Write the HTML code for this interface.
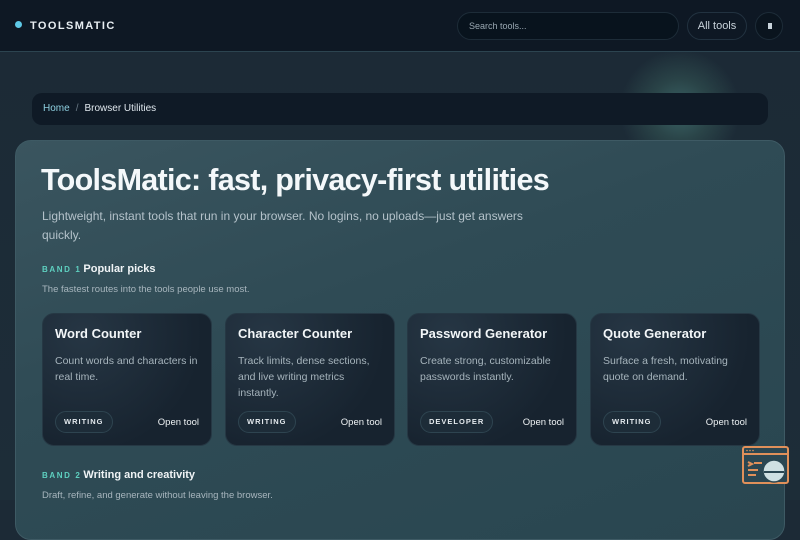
<!DOCTYPE html>
<html><head><meta charset="utf-8"><style>
*{box-sizing:border-box;margin:0;padding:0}
body{width:800px;height:500px;overflow:hidden;font-family:"Liberation Sans",sans-serif;background:radial-gradient(circle at 680px 110px,#3b6466 0,#2a4448 30px,transparent 60px),linear-gradient(180deg,#1c2a36,#1d2d38);color:#e8eef2;position:relative}
.hdr{position:absolute;left:0;top:0;width:800px;height:52px;background:#0e1824;border-bottom:1px solid #2c4450}
.logo{position:absolute;left:15px;top:20px;font-size:11px;font-weight:bold;letter-spacing:1.4px;color:#e8eef2}
.logo i{display:inline-block;width:7px;height:7px;border-radius:50%;background:#5ec8e6;margin-right:8px;vertical-align:1px}
.search{position:absolute;left:457px;top:12px;width:222px;height:28px;border-radius:14px;background:#08131d;border:1px solid #1d2c38;font-size:9px;color:#9aa8b2;padding:8px 11px}
.all{position:absolute;left:687px;top:12px;width:60px;height:28px;border-radius:14px;border:1px solid #223240;font-size:11px;color:#c8d2da;text-align:center;line-height:26px}
.th{position:absolute;left:755px;top:12px;width:28px;height:28px;border-radius:14px;background:#0a141e;border:1px solid #1d2c38}
.th:after{content:"";position:absolute;left:12px;top:10px;width:4px;height:6px;background:#c8d2da}
.bc{position:absolute;left:32px;top:93px;width:736px;height:32px;border-radius:10px;background:#0f1a26;font-size:10px;padding:10px 11px;color:#e0e8ee}
.bc span{color:#8ed0e0}.bc em{font-style:normal;color:#6a7a86;margin:0 6px}
.main{position:absolute;left:15px;top:140px;width:770px;height:400px;border-radius:16px;background:linear-gradient(160deg,#3a555f 0%,#2f4b55 40%,#294650 100%);border:1px solid #3e5a64}
h1{position:absolute;left:25px;top:22px;font-size:30.5px;font-weight:bold;color:#f4f8fa;letter-spacing:-0.7px}
.lead{position:absolute;left:26px;top:66px;width:520px;font-size:12px;line-height:19px;color:#b4c2ca}
.band{position:absolute;left:26px;font-size:11px;font-weight:bold;color:#f0f4f6}
.band b{font-size:8px;letter-spacing:1.6px;color:#5ed0c0;margin-right:2px}
.sub{position:absolute;left:26px;font-size:9.5px;color:#a8b6be}
.card{position:absolute;top:172px;width:170px;height:133px;border-radius:12px;background:radial-gradient(circle at 40px 20px,#263644,#17232f 70%);border:1px solid #263844;padding:12px 12px}
.card h3{font-size:13px;font-weight:bold;color:#f2f6f8}
.card p{margin-top:12px;font-size:10.5px;line-height:16px;color:#a6b4bc}
.tag{position:absolute;left:12px;bottom:12px;height:22px;border-radius:11px;border:1px solid #2e4450;background:#1d2c38;font-size:7.5px;font-weight:bold;letter-spacing:1px;padding:0 8px;line-height:20px;color:#e4eaee}
.open{position:absolute;right:12px;bottom:17px;font-size:9.5px;color:#eef2f4}
.fab{position:absolute;left:742px;top:445px;width:48px;height:42px}
</style></head><body>
<div class="hdr"><div class="logo"><i></i>TOOLSMATIC</div><div class="search">Search tools...</div><div class="all">All tools</div><div class="th"></div></div>
<div class="bc"><span>Home</span><em>/</em>Browser Utilities</div>
<div class="main">
<h1>ToolsMatic: fast, privacy-first utilities</h1>
<div class="lead">Lightweight, instant tools that run in your browser. No logins, no uploads—just get answers quickly.</div>
<div class="band" style="top:122px"><b>BAND 1</b>Popular picks</div>
<div class="sub" style="top:143px">The fastest routes into the tools people use most.</div>
<div class="card" style="left:26px"><h3>Word Counter</h3><p>Count words and characters in real time.</p><div class="tag">WRITING</div><div class="open">Open tool</div></div>
<div class="card" style="left:209px"><h3>Character Counter</h3><p>Track limits, dense sections, and live writing metrics instantly.</p><div class="tag">WRITING</div><div class="open">Open tool</div></div>
<div class="card" style="left:391px"><h3>Password Generator</h3><p>Create strong, customizable passwords instantly.</p><div class="tag">DEVELOPER</div><div class="open">Open tool</div></div>
<div class="card" style="left:574px"><h3>Quote Generator</h3><p>Surface a fresh, motivating quote on demand.</p><div class="tag">WRITING</div><div class="open">Open tool</div></div>
<div class="band" style="top:328px"><b>BAND 2</b>Writing and creativity</div>
<div class="sub" style="top:349px">Draft, refine, and generate without leaving the browser.</div>
</div>
<svg class="fab" viewBox="0 0 48 40"><rect x="1" y="1" width="45" height="36" rx="2" fill="#2b4752" stroke="#e0905a" stroke-width="2"/><line x1="1" y1="8" x2="46" y2="8" stroke="#e0905a" stroke-width="2"/><circle cx="5" cy="4.5" r="0.8" fill="#e0905a"/><circle cx="8" cy="4.5" r="0.8" fill="#e0905a"/><circle cx="11" cy="4.5" r="0.8" fill="#e0905a"/><path d="M6 16l4 2-4 2M12 17h8M6 24h10M6 29h8" stroke="#e0905a" stroke-width="2" fill="none"/><circle cx="32" cy="25" r="11" fill="#cfe0e2" stroke="#2b4752" stroke-width="1.5"/><line x1="22" y1="26" x2="42" y2="26" stroke="#2b4752" stroke-width="2"/></svg>
</body></html>
